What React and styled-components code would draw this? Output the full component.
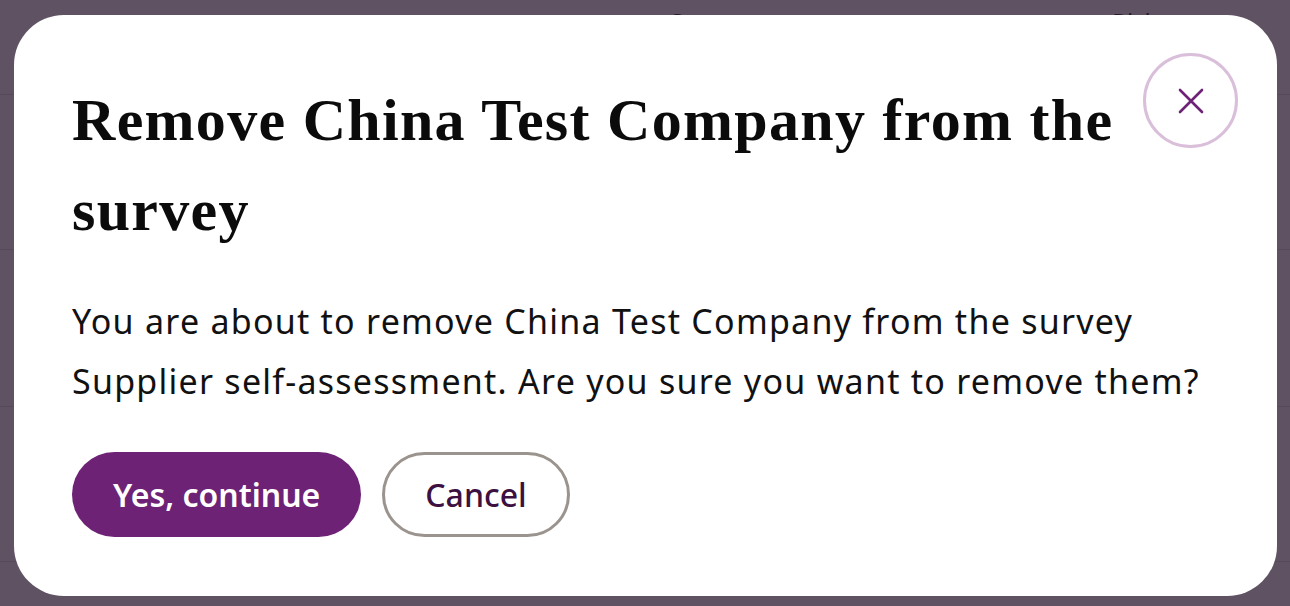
import React from "react";
import styled, { createGlobalStyle } from "styled-components";

const GlobalStyle = createGlobalStyle`
  html, body { margin: 0; padding: 0; background: #ffffff; }
  body { font-family: "Noto Sans", "Liberation Sans", sans-serif; overflow: hidden; }
  * { box-sizing: border-box; }
`;

const Page = styled.div`
  width: 1290px;
  height: 606px;
  background: #ffffff;
`;

const PageHeader = styled.div`
  height: 95px;
  display: grid;
  grid-template-columns: 670px 442px 1fr;
  padding-top: 5px;
  border-bottom: 1px solid #d6d6d6;
  font-family: "Noto Sans", sans-serif;
  font-size: 24px;
  color: #000;
`;

const HeaderCell = styled.div`
  padding-left: 0;
`;

const PageRow = styled.div`
  height: ${(p) => p.$h}px;
  border-bottom: 1px solid #d6d6d6;
`;

const Overlay = styled.div`
  position: fixed;
  inset: 0;
  background: rgba(50, 35, 55, 0.78);
  display: flex;
  align-items: flex-start;
  justify-content: flex-start;
  padding: 15px 0 0 14px;
`;

const Modal = styled.div`
  position: relative;
  width: 1263px;
  height: 581px;
  background: #ffffff;
  border-radius: 50px;
  padding: 60px 40px 0 58px;
  display: flex;
  flex-direction: column;
`;

const Title = styled.h2`
  margin: 0;
  width: 1070px;
  font-family: "Liberation Serif", "DejaVu Serif", serif;
  font-weight: 700;
  font-size: 60px;
  letter-spacing: 1.3px;
  line-height: 90px;
  color: #0b0b0b;
`;

const Message = styled.p`
  margin: 36px 0 0 0;
  max-width: 1160px;
  font-family: "Noto Sans", "Liberation Sans", sans-serif;
  font-size: 34px;
  letter-spacing: 1.25px;
  line-height: 60px;
  color: #111111;
`;

const Actions = styled.div`
  display: flex;
  gap: 21px;
  margin-top: 41px;
`;

const Button = styled.button`
  height: 85px;
  padding: 0 ${(p) => (p.$primary ? "41px" : "40px")};
  border-radius: 43px;
  border: ${(p) => (p.$primary ? "none" : "3px solid #9b948e")};
  background: ${(p) => (p.$primary ? "#6d2275" : "#ffffff")};
  color: ${(p) => (p.$primary ? "#ffffff" : "#3c1040")};
  font-family: "Noto Sans", "Liberation Sans", sans-serif;
  font-weight: ${(p) => (p.$primary ? 600 : 500)};
  font-size: 32px;
  cursor: pointer;
`;

const CloseButton = styled.button`
  position: absolute;
  top: 38px;
  right: 39px;
  width: 95px;
  height: 95px;
  border-radius: 50%;
  border: 3px solid #d9bfda;
  background: #ffffff;
  display: flex;
  align-items: center;
  justify-content: center;
  padding: 0;
  cursor: pointer;
`;

export default function App() {
  return (
    <>
      <GlobalStyle />
      <Page>
        <PageHeader>
          <HeaderCell />
          <HeaderCell>Status</HeaderCell>
          <HeaderCell>Risk</HeaderCell>
        </PageHeader>
        <PageRow $h={155} />
        <PageRow $h={157} />
        <PageRow $h={155} />
      </Page>
      <Overlay>
        <Modal role="dialog" aria-modal="true">
          <CloseButton aria-label="Close">
            <svg width="26" height="26" viewBox="0 0 26 26" fill="none">
              <path d="M2 2 L24 24 M24 2 L2 24" stroke="#6d2275" strokeWidth="2.6" strokeLinecap="round" />
            </svg>
          </CloseButton>
          <Title>Remove China Test Company from the survey</Title>
          <Message>
            You are about to remove China Test Company from the survey Supplier self-assessment. Are you sure you want to remove them?
          </Message>
          <Actions>
            <Button $primary>Yes, continue</Button>
            <Button>Cancel</Button>
          </Actions>
        </Modal>
      </Overlay>
    </>
  );
}
